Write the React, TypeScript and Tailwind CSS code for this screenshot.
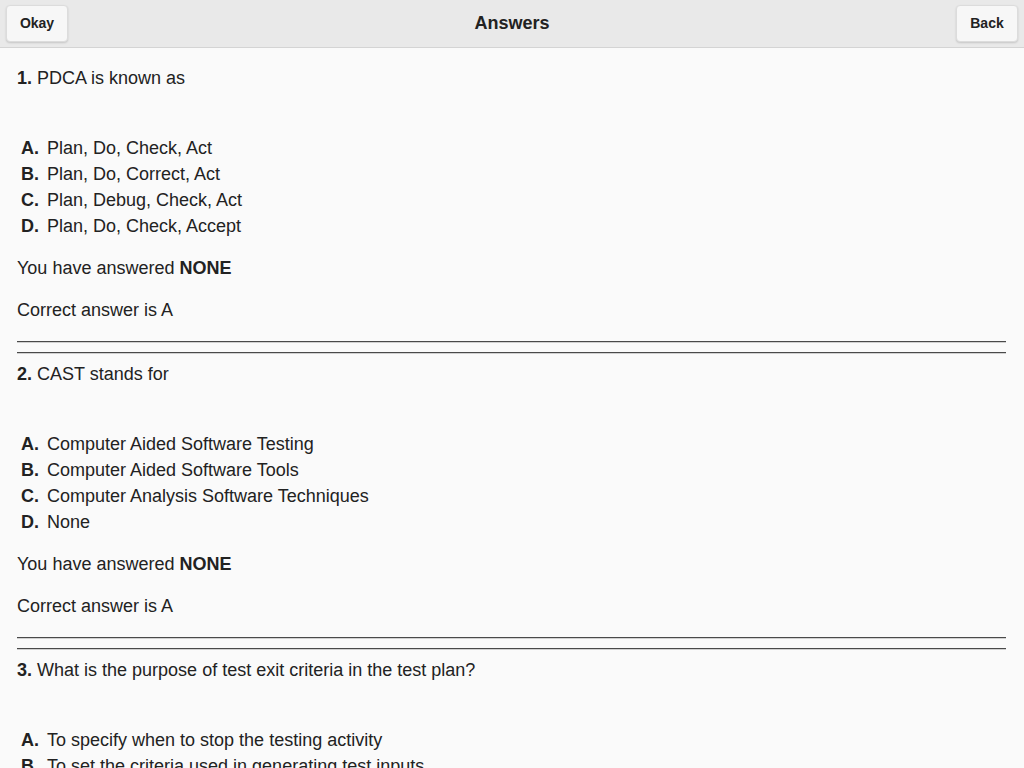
const questions = [
  {
    no: 1,
    text: 'PDCA is known as',
    options: ['Plan, Do, Check, Act', 'Plan, Do, Correct, Act', 'Plan, Debug, Check, Act', 'Plan, Do, Check, Accept'],
    answered: 'NONE',
    correct: 'A',
  },
  {
    no: 2,
    text: 'CAST stands for',
    options: [
      'Computer Aided Software Testing',
      'Computer Aided Software Tools',
      'Computer Analysis Software Techniques',
      'None',
    ],
    answered: 'NONE',
    correct: 'A',
  },
  {
    no: 3,
    text: 'What is the purpose of test exit criteria in the test plan?',
    options: [
      'To specify when to stop the testing activity',
      'To set the criteria used in generating test inputs',
      'To ensure that the test case specification is complete',
      'To know when a specific test has finished its execution',
    ],
    answered: 'NONE',
    correct: 'A',
  },
];

const letters = ['A', 'B', 'C', 'D'];

function HeaderButton({ label }: { label: string }) {
  return (
    <button className="h-[37px] w-[62px] rounded-[4px] border border-[#dcdcdc] bg-[#f7f7f7] text-[14px] font-bold text-[#222] shadow-[0_1px_2px_rgba(0,0,0,0.15)]">
      {label}
    </button>
  );
}

export default function App() {
  return (
    <div
      className="min-h-screen bg-[#fafafa] text-[#222]"
      style={{ fontFamily: '"Liberation Sans", Arial, Helvetica, sans-serif' }}
    >
      <header className="flex h-[48px] items-center justify-between border-b border-[#d4d4d4] bg-[#e9e9e9] px-[6px]">
        <HeaderButton label="Okay" />
        <h1 className="text-[18px] font-bold text-[#222]">Answers</h1>
        <HeaderButton label="Back" />
      </header>

      <main className="px-[17px] pt-[17px]">
        {questions.map((q) => (
          <section key={q.no}>
            <p className="text-[18px] leading-[26px]">
              <span className="font-bold">{q.no}.</span> {q.text}
            </p>

            <ul className="mt-[44px] pl-[4px]">
              {q.options.map((opt, i) => (
                <li key={i} className="flex text-[18px] leading-[26px]">
                  <span className="w-[26px] font-bold">{letters[i]}.</span>
                  <span>{opt}</span>
                </li>
              ))}
            </ul>

            <p className="mt-[16px] text-[18px] leading-[26px]">
              You have answered <span className="font-bold">{q.answered}</span>
            </p>
            <p className="mt-[16px] text-[18px] leading-[26px]">Correct answer is {q.correct}</p>

            <div className="mr-[1px] mt-[18px] h-px bg-[#4a4a4a]" />
            <div className="mr-[1px] h-px bg-[#d0d0d0]" />
            <div className="mr-[1px] mt-[9px] h-px bg-[#4a4a4a]" />
            <div className="mb-[7px] mr-[1px] h-px bg-[#d0d0d0]" />
          </section>
        ))}
      </main>
    </div>
  );
}
